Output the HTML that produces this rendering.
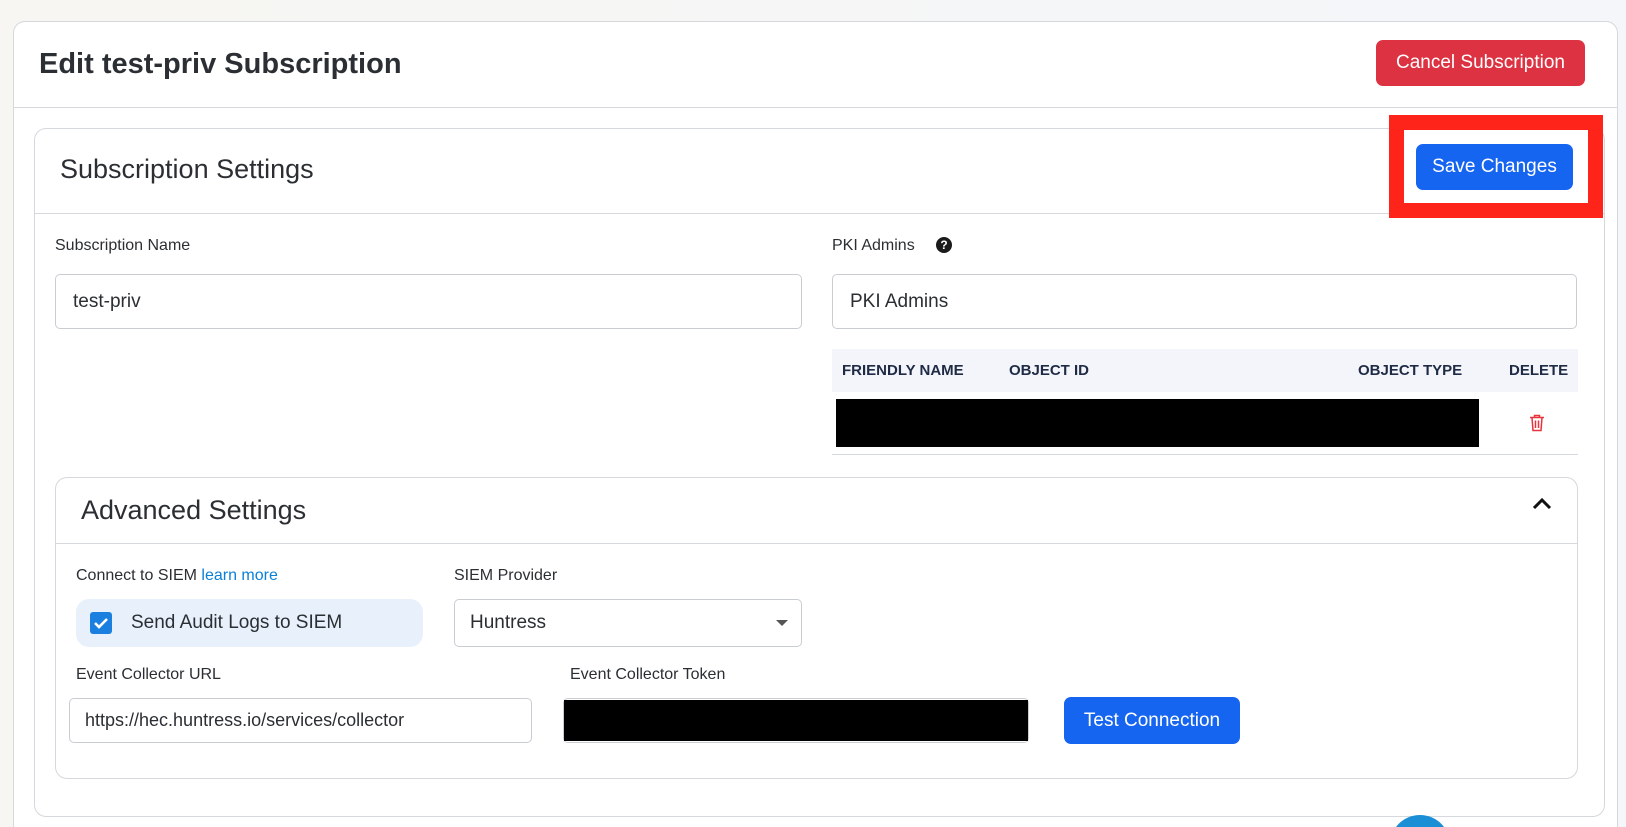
<!DOCTYPE html>
<html style="height:827px;overflow:hidden"><head><meta charset="utf-8"><style>
*{box-sizing:border-box;margin:0;padding:0}
body{width:1626px;height:827px;overflow:hidden;background:linear-gradient(90deg,#f7f6f2,#f4f6fa);font-family:"Liberation Sans",Arial,sans-serif;color:#2b2f33;position:relative}
.a{position:absolute}
.card{border:1px solid #d5d8dc;border-radius:12px;background:#fff}
.btn{color:#fff;border-radius:7px;font-size:19px;display:flex;align-items:center;justify-content:center}
.lbl{font-size:16px;color:#2b2f33}
.inp{border:1px solid #c9cdd2;border-radius:5px;background:#fff;font-size:19px;display:flex;align-items:center}
.th{font-size:15px;font-weight:bold;color:#1f2a44;top:362px}
</style></head><body>
<div class="a card" style="left:13px;top:21px;width:1605px;height:806px;border-bottom:none;border-bottom-left-radius:0;border-bottom-right-radius:0"></div>
<div class="a" style="left:39px;top:48px;font-size:29px;font-weight:bold;color:#2b2f33">Edit test-priv Subscription</div>
<div class="a btn" style="left:1376px;top:40px;width:209px;height:46px;background:#dc3241">Cancel Subscription</div>
<div class="a" style="left:14px;top:107px;width:1603px;height:1px;background:#d5d8dc"></div>

<div class="a card" style="left:34px;top:128px;width:1571px;height:689px"></div>
<div class="a" style="left:60px;top:154px;font-size:27px;color:#2b2f33">Subscription Settings</div>
<div class="a" style="left:35px;top:213px;width:1569px;height:1px;background:#d5d8dc"></div>
<div class="a" style="left:1389px;top:115px;width:214px;height:103px;border:15px solid #ff2419"></div>
<div class="a btn" style="left:1416px;top:144px;width:157px;height:46px;background:#1565f0">Save Changes</div>

<div class="a lbl" style="left:55px;top:237px">Subscription Name</div>
<div class="a inp" style="left:55px;top:274px;width:747px;height:55px;padding-left:17px">test-priv</div>
<div class="a lbl" style="left:832px;top:237px">PKI Admins</div>
<div class="a" style="left:936px;top:237px;width:16px;height:16px;border-radius:50%;background:#1b1b1b;color:#fff;font-size:12px;font-weight:bold;text-align:center;line-height:16px">?</div>
<div class="a inp" style="left:832px;top:274px;width:745px;height:55px;padding-left:17px">PKI Admins</div>
<div class="a" style="left:832px;top:349px;width:746px;height:43px;background:#f3f5fb"></div>
<div class="a th" style="left:842px">FRIENDLY NAME</div>
<div class="a th" style="left:1009px">OBJECT ID</div>
<div class="a th" style="left:1358px">OBJECT TYPE</div>
<div class="a th" style="left:1509px">DELETE</div>
<div class="a" style="left:836px;top:399px;width:643px;height:48px;background:#000"></div>
<svg class="a" style="left:1529px;top:414px" width="16" height="18" viewBox="0 0 16 18"><path d="M1 3.5h14M5.5 3.5V1.5h5v2M3 3.5l1 13h8l1-13M6.5 6.5v7.5M9.5 6.5v7.5" fill="none" stroke="#e8323c" stroke-width="1.5"/></svg>
<div class="a" style="left:832px;top:454px;width:746px;height:1px;background:#d5d8dc"></div>

<div class="a card" style="left:55px;top:477px;width:1523px;height:302px"></div>
<div class="a" style="left:81px;top:495px;font-size:27px;color:#2b2f33">Advanced Settings</div>
<svg class="a" style="left:1531px;top:497px" width="22" height="14" viewBox="0 0 22 14"><path d="M3 11l8-8 8 8" fill="none" stroke="#111" stroke-width="3"/></svg>
<div class="a" style="left:56px;top:543px;width:1521px;height:1px;background:#d5d8dc"></div>

<div class="a lbl" style="left:76px;top:567px">Connect to SIEM <span style="color:#0a7fd8">learn more</span></div>
<div class="a" style="left:76px;top:599px;width:347px;height:48px;background:#e8f1fb;border-radius:13px"></div>
<div class="a" style="left:90px;top:612px;width:22px;height:22px;background:#1b7fe0;border-radius:3px"></div>
<svg class="a" style="left:90px;top:612px" width="22" height="22" viewBox="0 0 22 22"><path d="M5 11l4 4 8-8" fill="none" stroke="#fff" stroke-width="2.6"/></svg>
<div class="a" style="left:131px;top:612px;font-size:19px;color:#2b2f33">Send Audit Logs to SIEM</div>
<div class="a lbl" style="left:454px;top:567px">SIEM Provider</div>
<div class="a inp" style="left:454px;top:599px;width:348px;height:48px;padding-left:15px">Huntress</div>
<div class="a" style="left:776px;top:620px;width:0;height:0;border-left:6px solid transparent;border-right:6px solid transparent;border-top:6px solid #555"></div>

<div class="a lbl" style="left:76px;top:666px">Event Collector URL</div>
<div class="a inp" style="left:69px;top:698px;width:463px;height:45px;padding-left:15px;font-size:18px">https://hec.huntress.io/services/collector</div>
<div class="a lbl" style="left:570px;top:666px">Event Collector Token</div>
<div class="a inp" style="left:563px;top:698px;width:466px;height:45px"></div>
<div class="a" style="left:564px;top:700px;width:464px;height:41px;background:#000"></div>
<div class="a btn" style="left:1064px;top:697px;width:176px;height:47px;background:#1565f0">Test Connection</div>
<div class="a" style="left:1390px;top:815px;width:60px;height:12px;overflow:hidden"><div style="width:60px;height:60px;border-radius:50%;background:#1a8fd6"></div></div>
</body></html>
